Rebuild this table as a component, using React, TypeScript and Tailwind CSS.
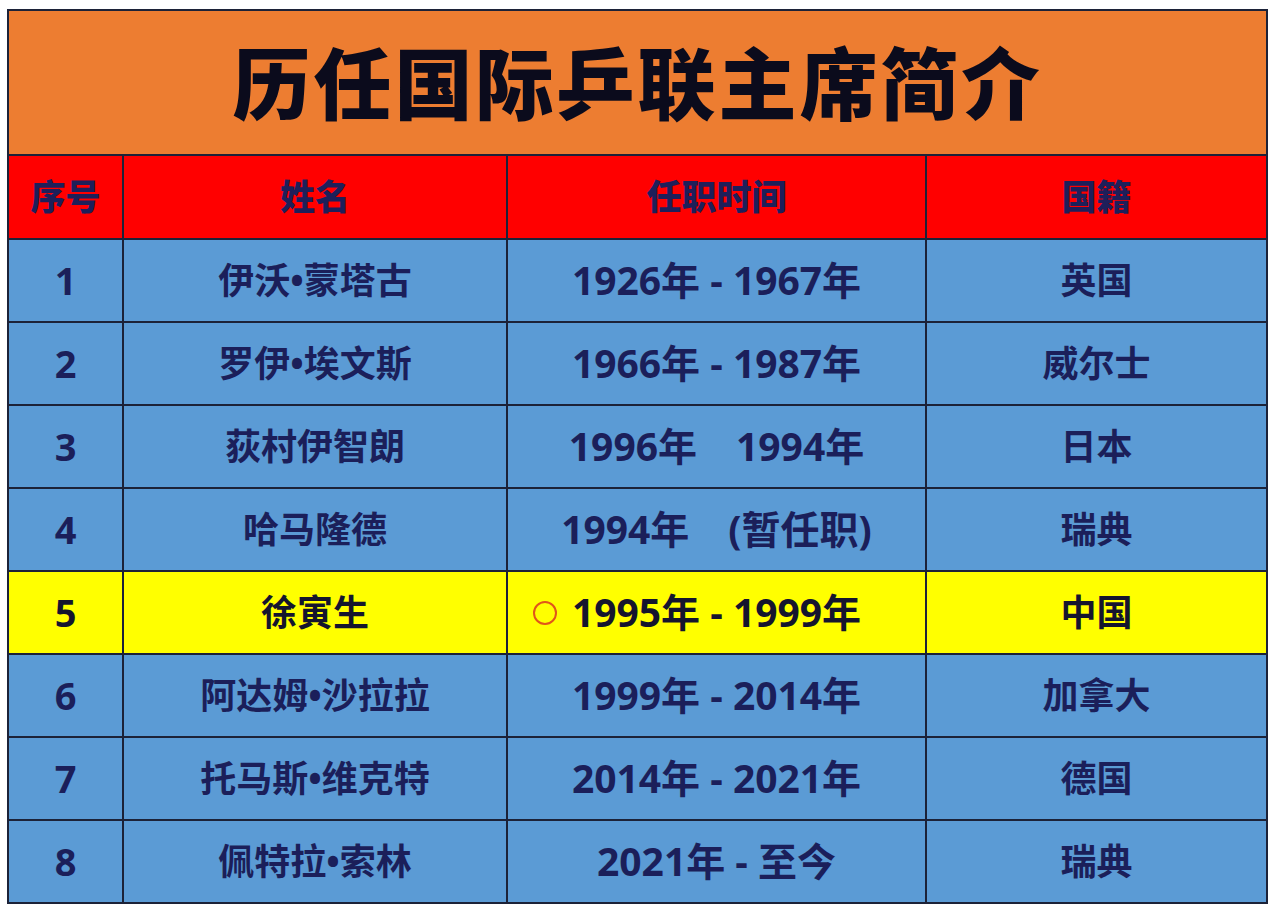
const FONT = { fontFamily: '"Open Sans", "Noto Sans CJK SC", "Noto Sans", sans-serif' };

const ROWS = [
  { no: "1", name: "伊沃•蒙塔古", time: "1926年 - 1967年", country: "英国" },
  { no: "2", name: "罗伊•埃文斯", time: "1966年 - 1987年", country: "威尔士" },
  { no: "3", name: "荻村伊智朗", time: "1996年　1994年", country: "日本" },
  { no: "4", name: "哈马隆德", time: "1994年　(暂任职)", country: "瑞典" },
  { no: "5", name: "徐寅生", time: "1995年 - 1999年", country: "中国", highlight: true },
  { no: "6", name: "阿达姆•沙拉拉", time: "1999年 - 2014年", country: "加拿大" },
  { no: "7", name: "托马斯•维克特", time: "2014年 - 2021年", country: "德国" },
  { no: "8", name: "佩特拉•索林", time: "2021年 - 至今", country: "瑞典" },
];

const COLS = "grid grid-cols-[113px_382px_417px_1fr] gap-x-[2px]";

export default function App() {
  return (
    <div className="w-[1274px] h-[911px] bg-white pt-[9px] pl-[7px]" style={FONT}>
      <div className="w-[1261px] bg-[#1c2238] p-[2px] flex flex-col gap-y-[2px]">
        {/* title */}
        <div className="h-[143px] bg-[#ED7D31] flex items-center justify-center pt-[2px]">
          <h1 className="text-[78px] font-black text-[#0b0b1c] leading-none tracking-[3px]">
            历任国际乒联主席简介
          </h1>
        </div>

        {/* header */}
        <div className={`${COLS} h-[82px]`}>
          {["序号", "姓名", "任职时间", "国籍"].map((h) => (
            <div
              key={h}
              className="bg-[#FF0000] flex items-center justify-center text-[35px] font-black text-[#1e1f5a]"
            >
              {h}
            </div>
          ))}
        </div>

        {ROWS.map((r) => {
          const bg = r.highlight ? "bg-[#FFFF00]" : "bg-[#5B9BD5]";
          const tc = r.highlight ? "text-[#15152e]" : "text-[#1b1f5a]";
          return (
            <div key={r.no} className={`${COLS} h-[81px] font-bold ${tc}`}>
              <div className={`${bg} flex items-center justify-center text-[38px]`}>{r.no}</div>
              <div className={`${bg} flex items-center justify-center text-[36px]`}>{r.name}</div>
              <div className={`${bg} relative flex items-center justify-center text-[39px]`}>
                {r.highlight && (
                  <span className="absolute left-[25px] top-[29px] w-[24px] h-[24px] rounded-full border-[2.5px] border-[#e0561a]" />
                )}
                {r.time}
              </div>
              <div className={`${bg} flex items-center justify-center text-[36px]`}>{r.country}</div>
            </div>
          );
        })}
      </div>
    </div>
  );
}
